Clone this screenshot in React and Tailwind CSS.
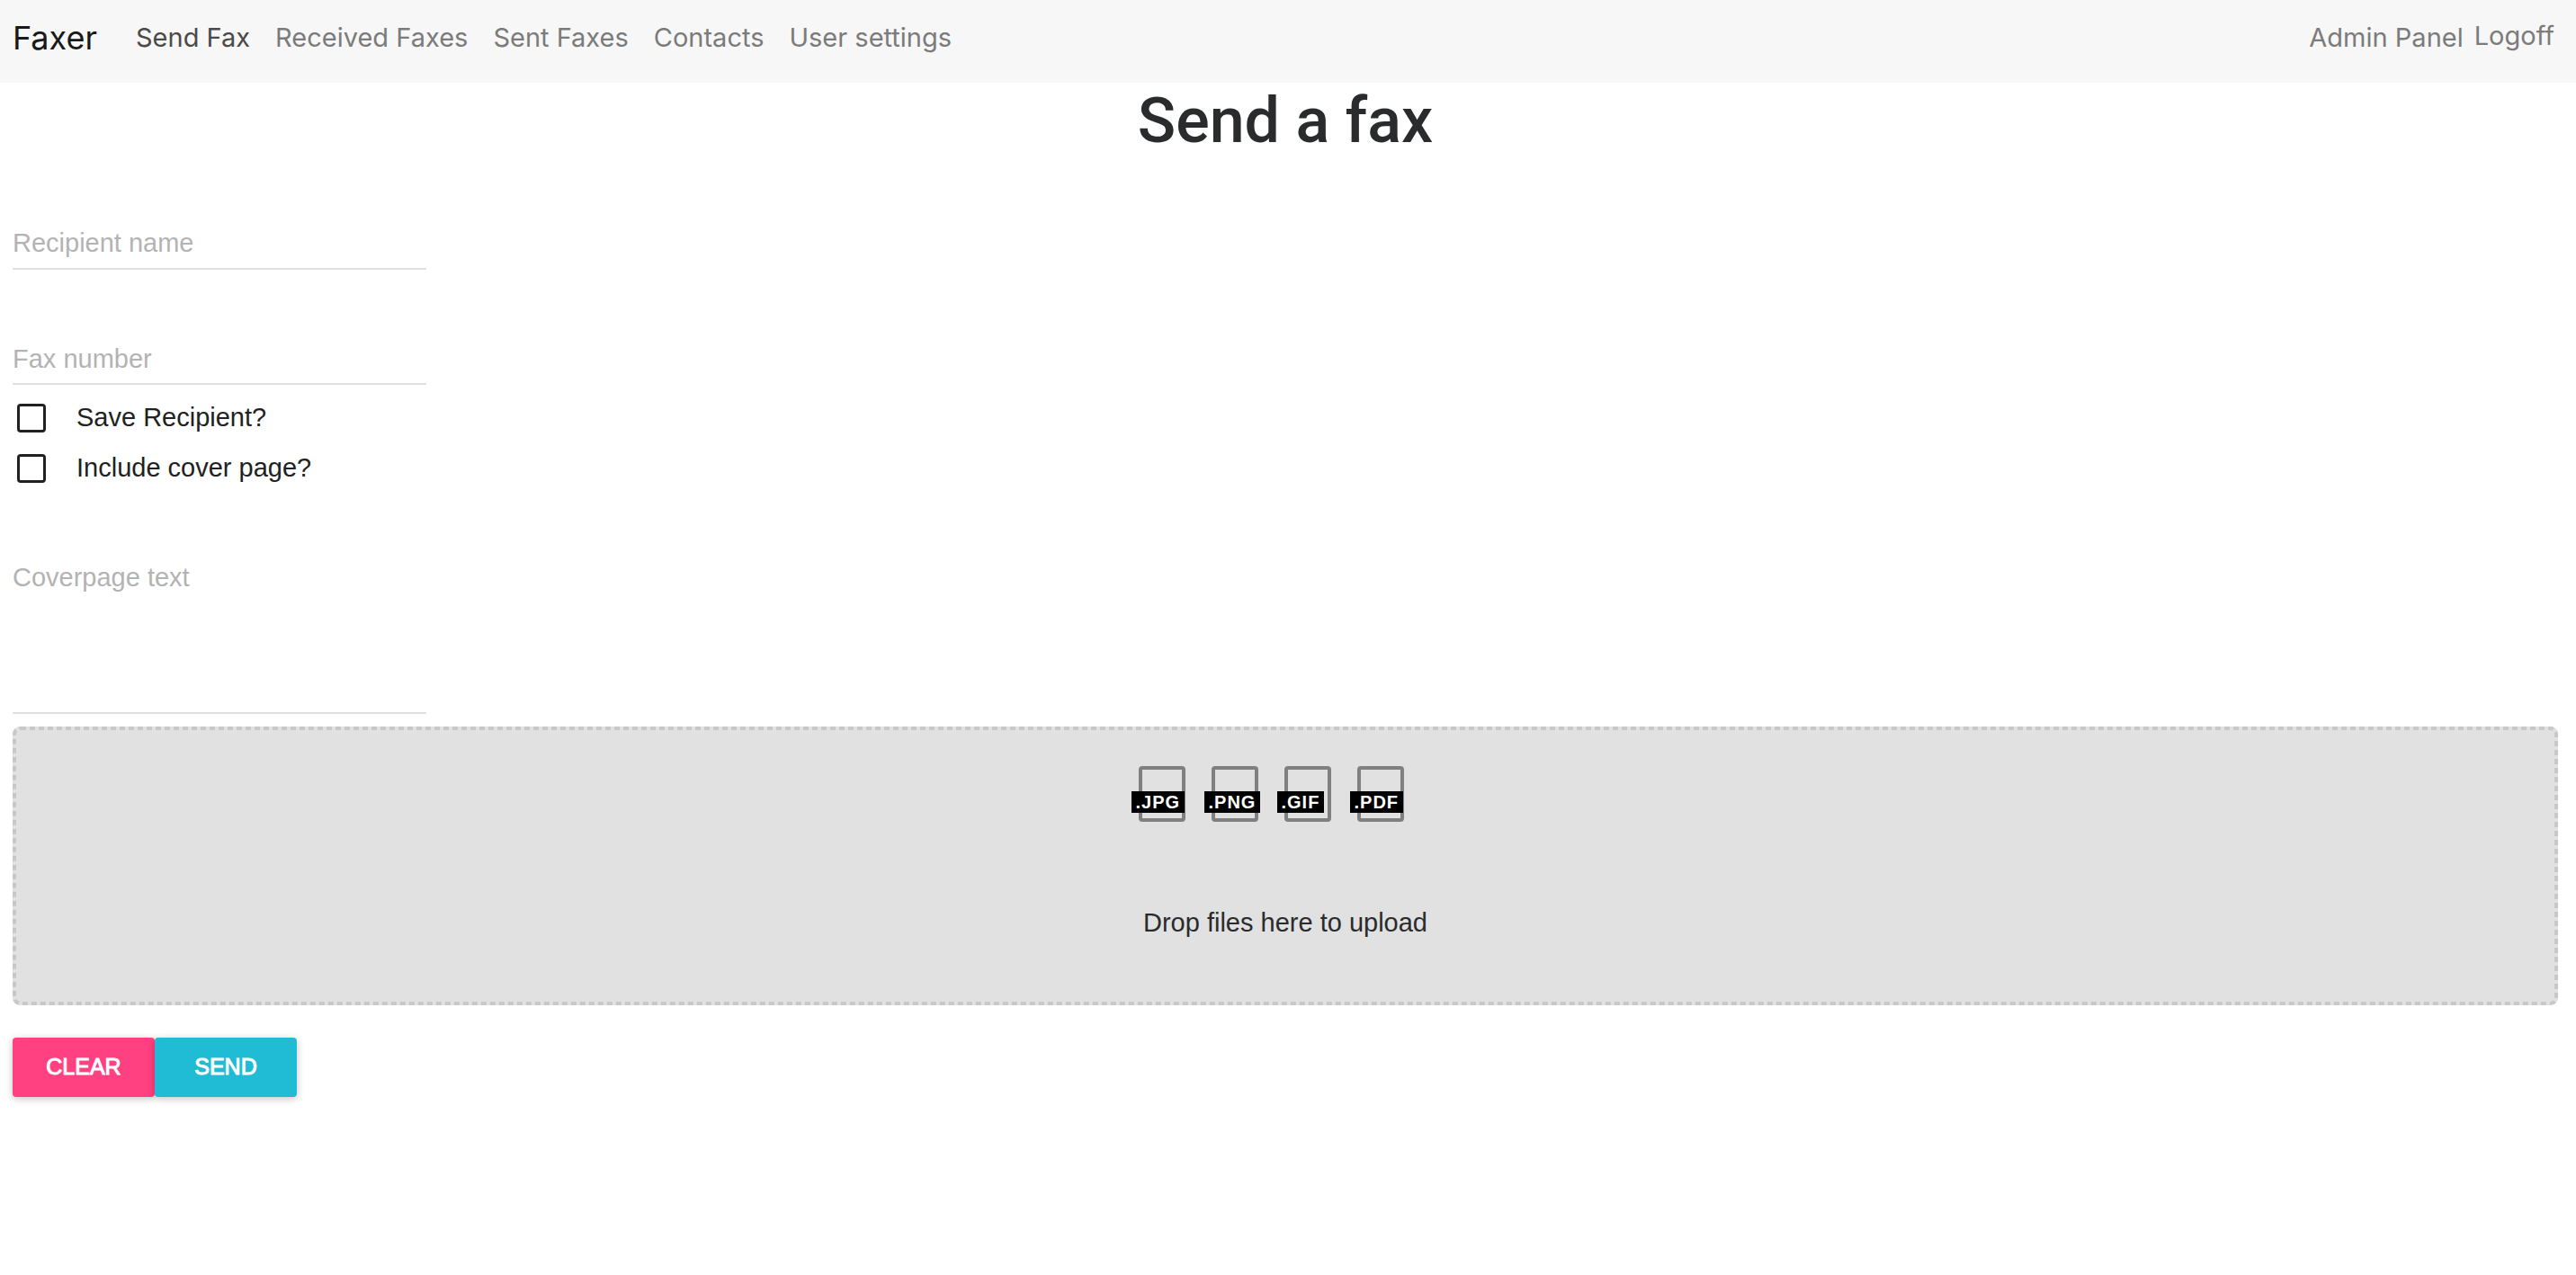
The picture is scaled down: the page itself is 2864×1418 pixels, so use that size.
import React from "react";

const navLinks = ["Received Faxes", "Sent Faxes", "Contacts", "User settings"];
const fileTypes = [".JPG", ".PNG", ".GIF", ".PDF"];

function NavBar() {
  return (
    <nav className="flex h-[92px] items-start justify-between bg-[#f7f7f7] px-[14px] pt-[18px] font-['Inter',sans-serif] text-[29px] leading-[48px] text-[#7b7b7b]">
      <div className="flex">
        <a href="#" className="mr-[43px] text-[36px] text-[#191919]">
          Faxer
        </a>
        <ul className="flex gap-7">
          <li>
            <a href="#" aria-current="page" className="text-[#4a4a4a]">
              Send Fax
            </a>
          </li>
          {navLinks.map((label) => (
            <li key={label}>
              <a href="#">{label}</a>
            </li>
          ))}
        </ul>
      </div>
      <div className="flex gap-3 pr-[10px]">
        <a href="#">Admin Panel</a>
        <button type="button" className="-mt-1">Logoff</button>
      </div>
    </nav>
  );
}

const fieldClass =
  "block w-[460px] border-b-2 border-[#e0e0e0] bg-transparent text-[29px] leading-[42px] text-[#212121] outline-none placeholder:text-[#b3b3b3] placeholder:opacity-100";

function CheckRow({ id, label }) {
  return (
    <div className="flex h-14 items-center">
      <input
        id={id}
        type="checkbox"
        className="ml-[5px] size-8 appearance-none rounded-[4px] border-[3px] border-[#212121] checked:bg-[#212121]"
      />
      <label htmlFor={id} className="pb-[2px] pl-[34px] text-[29px] leading-[42px] text-[#212121]">
        {label}
      </label>
    </div>
  );
}

function FileIcon({ label }) {
  return (
    <div className="relative h-[62px] w-[52px] rounded-[4px] border-4 border-[#808080]">
      <span className="absolute top-6 -left-3 bg-black px-[5px] text-[20px] leading-6 font-bold tracking-wider text-white">
        {label}
      </span>
    </div>
  );
}

function DropZone() {
  return (
    <div className="relative mt-[14px] flex h-[310px] flex-col items-center rounded-[8px] bg-[#e1e1e1] pt-[44px]">
      <svg className="pointer-events-none absolute inset-0 size-full" aria-hidden="true">
        <rect
          x="2"
          y="2"
          rx="7"
          fill="none"
          stroke="#c8c8c8"
          strokeWidth="4"
          strokeDasharray="6 4"
          style={{ width: "calc(100% - 4px)", height: "calc(100% - 4px)" }}
        />
      </svg>
      <div className="flex gap-[29px] pr-8">
        {fileTypes.map((type) => (
          <FileIcon key={type} label={type} />
        ))}
      </div>
      <p className="mt-[91px] text-[29px] leading-[42px] text-[#292b2c]">
        Drop files here to upload
      </p>
    </div>
  );
}

const buttonClass =
  "h-[66px] w-[158px] rounded-[4px] text-[25px] text-white [-webkit-text-stroke:1px_white] shadow-[0_2px_10px_rgba(0,0,0,0.12),0_2px_8px_rgba(0,0,0,0.12)]";

export default function App() {
  return (
    <div className="min-h-screen bg-white font-['Liberation_Sans',Arial,sans-serif]">
      <NavBar />
      <h1 className="pt-1 pr-5 pl-[14px] text-center font-['Roboto',sans-serif] text-[70px] leading-[76px] font-medium text-[#292b2c]">
        Send a fax
      </h1>
      <form className="pr-5 pl-[14px]" onSubmit={(e) => e.preventDefault()}>
        <input
          aria-label="Recipient name"
          placeholder="Recipient name"
          className={`${fieldClass} mt-[78px] h-[50px] pb-2`}
        />
        <input
          aria-label="Fax number"
          placeholder="Fax number"
          className={`${fieldClass} mt-[78px] h-[50px] pb-[6px]`}
        />
        <div className="mt-[9px]">
          <CheckRow id="save-recipient" label="Save Recipient?" />
          <CheckRow id="cover-page" label="Include cover page?" />
        </div>
        <textarea
          aria-label="Coverpage text"
          placeholder="Coverpage text"
          className={`${fieldClass} mt-[72px] h-[173px] resize-none`}
        />
        <DropZone />
        <div className="mt-9 flex">
          <button type="reset" className={`${buttonClass} bg-[#ff4081]`}>
            CLEAR
          </button>
          <button type="submit" className={`${buttonClass} bg-[#20bcd5]`}>
            SEND
          </button>
        </div>
      </form>
    </div>
  );
}
